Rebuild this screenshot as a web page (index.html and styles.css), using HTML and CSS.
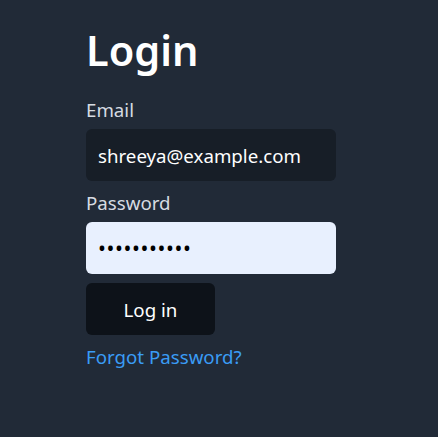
FILE: index.html
```html
<!DOCTYPE html>
<html>
<head>
<meta charset="utf-8">
<link rel="stylesheet" href="styles.css">
</head>
<body>
<main class="page">
  <form class="login">
    <h1 class="title">Login</h1>
    <label class="label" for="email">Email</label>
    <input class="field field-dark" id="email" type="text" value="shreeya@example.com">
    <label class="label" for="pw">Password</label>
    <input class="field field-light" id="pw" type="password" value="secretpass1">
    <button class="btn" type="button">Log in</button>
    <a class="link" href="#">Forgot Password?</a>
  </form>
</main>
</body>
</html>
```

FILE: styles.css
```css
html, body {
  margin: 0;
  padding: 0;
  background: #212a37;
  height: 100%;
}
body {
  font-family: "Noto Sans", "Open Sans", sans-serif;
  color: #e5e7eb;
}
.page {
  padding: 22px 0 0 86px;
}
.login {
  display: flex;
  flex-direction: column;
  align-items: flex-start;
  width: 250px;
}
.title {
  margin: 0 0 20px 0;
  font-size: 41.5px;
  font-weight: 600;
  color: #ffffff;
  line-height: 56px;
}
.label {
  font-size: 18.7px;
  line-height: 24px;
  color: #d6dbe2;
  margin-bottom: 7px;
}
.field {
  box-sizing: border-box;
  width: 250px;
  height: 52px;
  border: none;
  border-radius: 6px;
  padding: 0 12px;
  font-family: inherit;
  font-size: 18.7px;
  outline: none;
  margin-bottom: 10px;
}
.field-dark {
  background: #171e27;
  color: #ffffff;
}
.field-light {
  background: #e8f0fe;
  color: #000000;
  margin-bottom: 9px;
  font-size: 21px;
  letter-spacing: 0.6px;
}
.btn {
  box-sizing: border-box;
  width: 129px;
  height: 52px;
  border: none;
  border-radius: 6px;
  background: #0d1219;
  color: #ffffff;
  font-family: inherit;
  font-size: 18.7px;
  margin-bottom: 10px;
}
.link {
  color: #3a9cf5;
  text-decoration: none;
  font-size: 18.7px;
  line-height: 24px;
}
```
